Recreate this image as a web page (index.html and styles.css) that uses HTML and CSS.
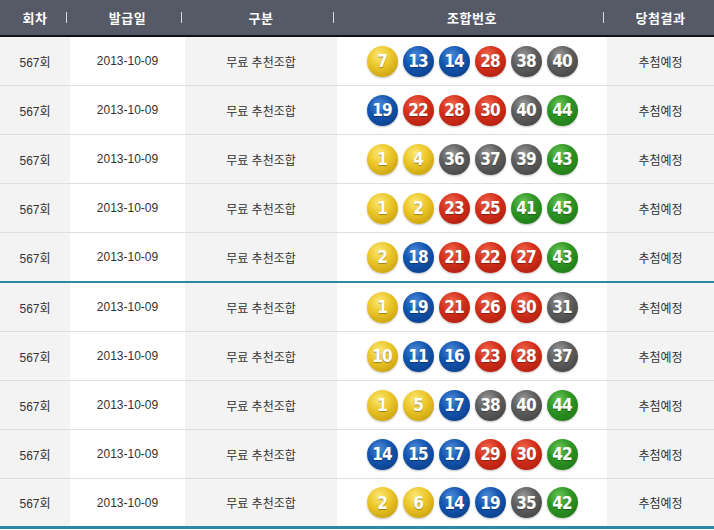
FILE: index.html
```html
<!DOCTYPE html>
<html lang="ko">
<head>
<meta charset="utf-8">
<link rel="stylesheet" href="styles.css">
</head>
<body>
<div class="board">
  <div class="head">
    <div class="hc">회차</div>
    <div class="hc">발급일</div>
    <div class="hc">구분</div>
    <div class="hc">조합번호</div>
    <div class="hc last">당첨결과</div>
  </div>

  <div class="row">
    <div class="c g1">567회</div><div class="c">2013-10-09</div><div class="c g1">무료 추천조합</div>
    <div class="c balls"><span class="ball y">7</span><span class="ball b">13</span><span class="ball b">14</span><span class="ball r">28</span><span class="ball k">38</span><span class="ball k">40</span></div>
    <div class="c g1">추첨예정</div>
  </div>
  <div class="row">
    <div class="c g1">567회</div><div class="c">2013-10-09</div><div class="c g1">무료 추천조합</div>
    <div class="c balls"><span class="ball b">19</span><span class="ball r">22</span><span class="ball r">28</span><span class="ball r">30</span><span class="ball k">40</span><span class="ball g">44</span></div>
    <div class="c g1">추첨예정</div>
  </div>
  <div class="row">
    <div class="c g1">567회</div><div class="c">2013-10-09</div><div class="c g1">무료 추천조합</div>
    <div class="c balls"><span class="ball y">1</span><span class="ball y">4</span><span class="ball k">36</span><span class="ball k">37</span><span class="ball k">39</span><span class="ball g">43</span></div>
    <div class="c g1">추첨예정</div>
  </div>
  <div class="row">
    <div class="c g1">567회</div><div class="c">2013-10-09</div><div class="c g1">무료 추천조합</div>
    <div class="c balls"><span class="ball y">1</span><span class="ball y">2</span><span class="ball r">23</span><span class="ball r">25</span><span class="ball g">41</span><span class="ball g">45</span></div>
    <div class="c g1">추첨예정</div>
  </div>
  <div class="row group-end">
    <div class="c g1">567회</div><div class="c">2013-10-09</div><div class="c g1">무료 추천조합</div>
    <div class="c balls"><span class="ball y">2</span><span class="ball b">18</span><span class="ball r">21</span><span class="ball r">22</span><span class="ball r">27</span><span class="ball g">43</span></div>
    <div class="c g1">추첨예정</div>
  </div>
  <div class="row">
    <div class="c g1">567회</div><div class="c">2013-10-09</div><div class="c g1">무료 추천조합</div>
    <div class="c balls"><span class="ball y">1</span><span class="ball b">19</span><span class="ball r">21</span><span class="ball r">26</span><span class="ball r">30</span><span class="ball k">31</span></div>
    <div class="c g1">추첨예정</div>
  </div>
  <div class="row">
    <div class="c g1">567회</div><div class="c">2013-10-09</div><div class="c g1">무료 추천조합</div>
    <div class="c balls"><span class="ball y">10</span><span class="ball b">11</span><span class="ball b">16</span><span class="ball r">23</span><span class="ball r">28</span><span class="ball k">37</span></div>
    <div class="c g1">추첨예정</div>
  </div>
  <div class="row">
    <div class="c g1">567회</div><div class="c">2013-10-09</div><div class="c g1">무료 추천조합</div>
    <div class="c balls"><span class="ball y">1</span><span class="ball y">5</span><span class="ball b">17</span><span class="ball k">38</span><span class="ball k">40</span><span class="ball g">44</span></div>
    <div class="c g1">추첨예정</div>
  </div>
  <div class="row">
    <div class="c g1">567회</div><div class="c">2013-10-09</div><div class="c g1">무료 추천조합</div>
    <div class="c balls"><span class="ball b">14</span><span class="ball b">15</span><span class="ball b">17</span><span class="ball r">29</span><span class="ball r">30</span><span class="ball g">42</span></div>
    <div class="c g1">추첨예정</div>
  </div>
  <div class="row group-end last-row">
    <div class="c g1">567회</div><div class="c">2013-10-09</div><div class="c g1">무료 추천조합</div>
    <div class="c balls"><span class="ball y">2</span><span class="ball y">6</span><span class="ball b">14</span><span class="ball b">19</span><span class="ball k">35</span><span class="ball g">42</span></div>
    <div class="c g1">추첨예정</div>
  </div>
</div>
</body>
</html>
```
FILE: styles.css
```css
* { box-sizing: border-box; }
html, body { margin: 0; padding: 0; background: #fff; }
body {
  font-family: "Liberation Sans", "Noto Sans CJK KR", sans-serif;
  font-size: 12px;
  color: #333;
}
.board { width: 714px; }
.head, .row {
  display: grid;
  grid-template-columns: 70px 115px 152px 270px 107px;
}
.head {
  height: 37px;
  background: #565a66;
  border-bottom: 2px solid #111;
}
.hc {
  position: relative;
  display: flex;
  align-items: center;
  justify-content: center;
  color: #fff;
  font-weight: bold;
  font-size: 13px;
  letter-spacing: 0.5px;
}
.hc::after {
  content: "";
  position: absolute;
  right: 3px;
  top: 12px;
  width: 1px;
  height: 11px;
  background: #d8d8dc;
}
.hc.last::after { display: none; }
.row {
  height: 49px;
  border-bottom: 1px solid #dedede;
}
.row.group-end { height: 50px; border-bottom: 2px solid #2d88a8; }
.row.last-row { border-bottom-width: 3px; }
.c {
  display: flex;
  align-items: center;
  justify-content: center;
  background: #fff;
}
.c.g1 { background: #f3f3f3; }
.balls { gap: 5px; }
.ball {
  width: 31px;
  height: 31px;
  border-radius: 50%;
  display: flex;
  align-items: center;
  justify-content: center;
  color: #fff;
  font-family: "DejaVu Sans Condensed", "DejaVu Sans", sans-serif;
  font-weight: bold;
  font-size: 17px;
  letter-spacing: -1px;
  text-shadow: 0 1px 1px rgba(0,0,0,0.35);
  box-shadow: 0 1px 2px rgba(0,0,0,0.25);
}
.ball.y { background: radial-gradient(circle at 40% 30%, #fbe878 0%, #ecc72a 40%, #c9a00c 85%, #b08a06 100%); }
.ball.b { background: radial-gradient(circle at 40% 30%, #4d8ad8 0%, #1456b0 40%, #0a3f8c 85%, #083274 100%); }
.ball.r { background: radial-gradient(circle at 40% 30%, #f0684e 0%, #d5301c 40%, #b01e10 85%, #90180c 100%); }
.ball.k { background: radial-gradient(circle at 40% 30%, #9a9a9a 0%, #606060 40%, #444 85%, #333 100%); }
.ball.g { background: radial-gradient(circle at 40% 30%, #6cc45a 0%, #2f9624 40%, #1f7818 85%, #166010 100%); }
```
